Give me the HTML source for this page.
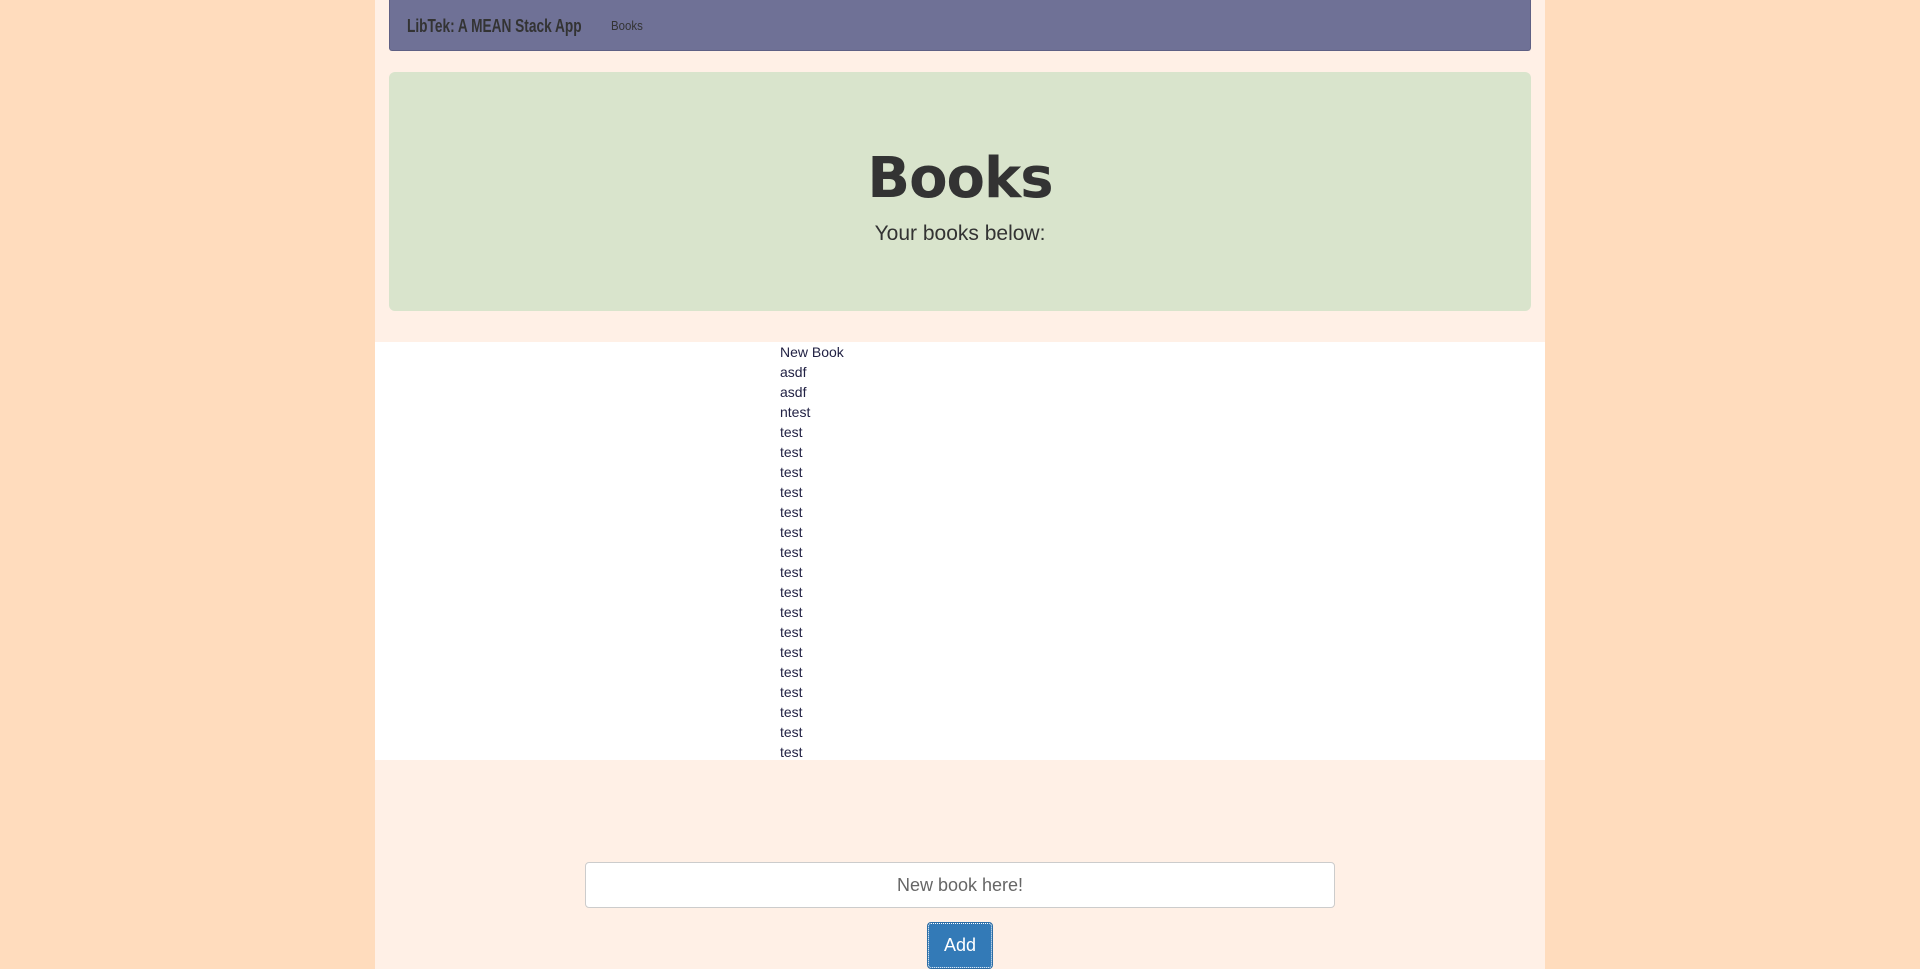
<!DOCTYPE html>
<html><head><meta charset="utf-8"><style>
body{margin:0;background:#ffdcbd;font-family:"Liberation Sans",sans-serif;height:969px;overflow:hidden}
.c{position:absolute;left:375px;top:0;width:1170px;height:969px;background:#fff0e6}
.nav{position:absolute;left:14px;top:0;width:1140px;height:50px;background:#6f7196;border:1px solid #5e6084;border-top:none;border-radius:0 0 3px 3px}
.brand{position:absolute;left:17px;top:16px;font-weight:bold;font-size:18px;color:#333;transform:scaleX(0.76);transform-origin:left;white-space:nowrap}
.lnk{position:absolute;left:221px;top:18px;font-size:13px;color:#333;transform:scaleX(0.88);transform-origin:left}
.jum{position:absolute;left:14px;top:72px;width:1142px;height:239px;background:#d9e4cc;border-radius:6px;text-align:center;color:#333}
.jum h1{margin:0;position:absolute;width:100%;top:72px;font-size:56px;font-weight:bold;line-height:70px;font-family:"DejaVu Sans","Liberation Sans",sans-serif;letter-spacing:-1px}
.jum p{margin:0;position:absolute;width:100%;top:150px;font-size:21px}
.list{position:absolute;left:0;top:342px;width:1170px;height:418px;background:#fff}
.list div{padding-left:405px;font-size:14px;line-height:20px;height:20px;color:#222244}
.inp{position:absolute;left:210px;top:862px;width:748px;height:44px;background:#fff;border:1px solid #ccc;border-radius:4px;text-align:center;line-height:44px;font-size:18px;color:#666}
.btn{position:absolute;left:553px;top:923px;width:62px;height:43px;background:#337ab7;border:1px dotted #fff;outline:1px solid #2e6da4;border-radius:3px;color:#fff;font-size:18px;text-align:center;line-height:43px}
</style></head><body>
<div class="c">
<div class="nav"><span class="brand">LibTek: A MEAN Stack App</span><span class="lnk">Books</span></div>
<div class="jum"><h1>Books</h1><p>Your books below:</p></div>
<div class="list">
<div>New Book</div><div>asdf</div><div>asdf</div><div>ntest</div>
<div>test</div><div>test</div><div>test</div><div>test</div><div>test</div><div>test</div><div>test</div><div>test</div><div>test</div><div>test</div><div>test</div><div>test</div><div>test</div><div>test</div><div>test</div><div>test</div><div>test</div>
</div>
<div class="inp">New book here!</div>
<div class="btn">Add</div>
</div>
</body></html>
